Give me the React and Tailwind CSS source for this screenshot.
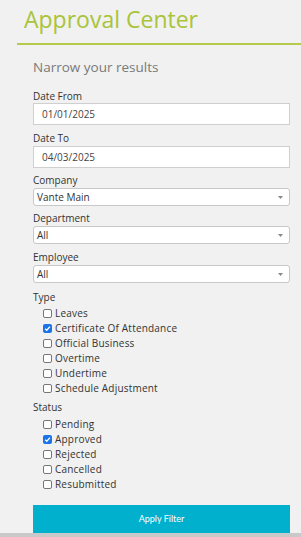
const types = [
  { label: 'Leaves', checked: false },
  { label: 'Certificate Of Attendance', checked: true },
  { label: 'Official Business', checked: false },
  { label: 'Overtime', checked: false },
  { label: 'Undertime', checked: false },
  { label: 'Schedule Adjustment', checked: false },
];

const statuses = [
  { label: 'Pending', checked: false },
  { label: 'Approved', checked: true },
  { label: 'Rejected', checked: false },
  { label: 'Cancelled', checked: false },
  { label: 'Resubmitted', checked: false },
];

const Check = ({ label, checked }) => (
  <div className="flex items-center h-[15px] pl-[10px]">
    {checked ? (
      <span className="w-[9px] h-[9px] rounded-[2px] bg-[#1a73e8] flex items-center justify-center">
        <svg width="7" height="7" viewBox="0 0 8 8">
          <path d="M1.3 4.2 L3.2 6 L6.8 1.8" stroke="white" strokeWidth="1.5" fill="none" />
        </svg>
      </span>
    ) : (
      <span className="w-[9px] h-[9px] rounded-[2px] border border-[#767676] bg-white" />
    )}
    <span className="ml-[3px] text-[10px] text-[#333] tracking-[0.2px]">{label}</span>
  </div>
);

const Label = ({ children }) => (
  <div className="text-[10px] text-[#333] leading-[13px] mb-[1px]">{children}</div>
);

const Select = ({ value }) => (
  <div className="h-[18px] bg-white border border-[#c8c8c8] rounded-[3px] flex items-center justify-between pl-[3px] pr-[6px]">
    <span className="text-[10px] text-[#333]">{value}</span>
    <svg width="5" height="3" viewBox="0 0 5 3"><path d="M0 0 H5 L2.5 3 Z" fill="#888" /></svg>
  </div>
);

const DateInput = ({ value }) => (
  <div className="h-[22px] bg-white border border-[#cfcfcf] flex items-center pl-[8px]">
    <span className="text-[10px] text-[#444]">{value}</span>
  </div>
);

export default function App() {
  return (
    <div className="w-[301px] h-[537px] bg-[#f0f1f0] overflow-hidden flex flex-col" style={{ fontFamily: '"Open Sans", sans-serif' }}>
      <div className="shrink-0 ml-[17px] h-[45px] border-b-2 border-[#b5cc4a] pl-[7px] pt-[4px]">
        <h1 className="text-[23px] leading-[30px] text-[#a9c43c]">Approval Center</h1>
      </div>
      <div className="ml-[33px] mr-[11px] flex-1 flex flex-col">
        <div className="mt-[13px] text-[13.5px] text-[#7a7a7a] leading-[18px]">Narrow your results</div>

        <div className="mt-[14px]">
          <div className="text-[10px] text-[#333] leading-[13px]">Date From</div>
          <DateInput value="01/01/2025" />
        </div>
        <div className="mt-[7px]">
          <Label>Date To</Label>
          <DateInput value="04/03/2025" />
        </div>
        <div className="mt-[6px]">
          <Label>Company</Label>
          <Select value="Vante Main" />
        </div>
        <div className="mt-[6px]">
          <Label>Department</Label>
          <Select value="All" />
        </div>
        <div className="mt-[7px]">
          <Label>Employee</Label>
          <Select value="All" />
        </div>

        <div className="mt-[8px]">
          <div className="text-[10px] text-[#333] leading-[13px] mb-[2px]">Type</div>
          {types.map((t) => <Check key={t.label} {...t} />)}
        </div>

        <div className="mt-[5px]">
          <div className="text-[10px] text-[#333] leading-[13px] mb-[3px]">Status</div>
          {statuses.map((t) => <Check key={t.label} {...t} />)}
        </div>

        <button className="mt-[13px] h-[28px] shrink-0 bg-[#00b0cd] text-white text-[9px] w-full" style={{ fontFamily: 'Lato, sans-serif' }}>
          Apply Filter
        </button>
      </div>
      <div className="shrink-0 h-[4px] bg-[#c9c9c9]" />
    </div>
  );
}
